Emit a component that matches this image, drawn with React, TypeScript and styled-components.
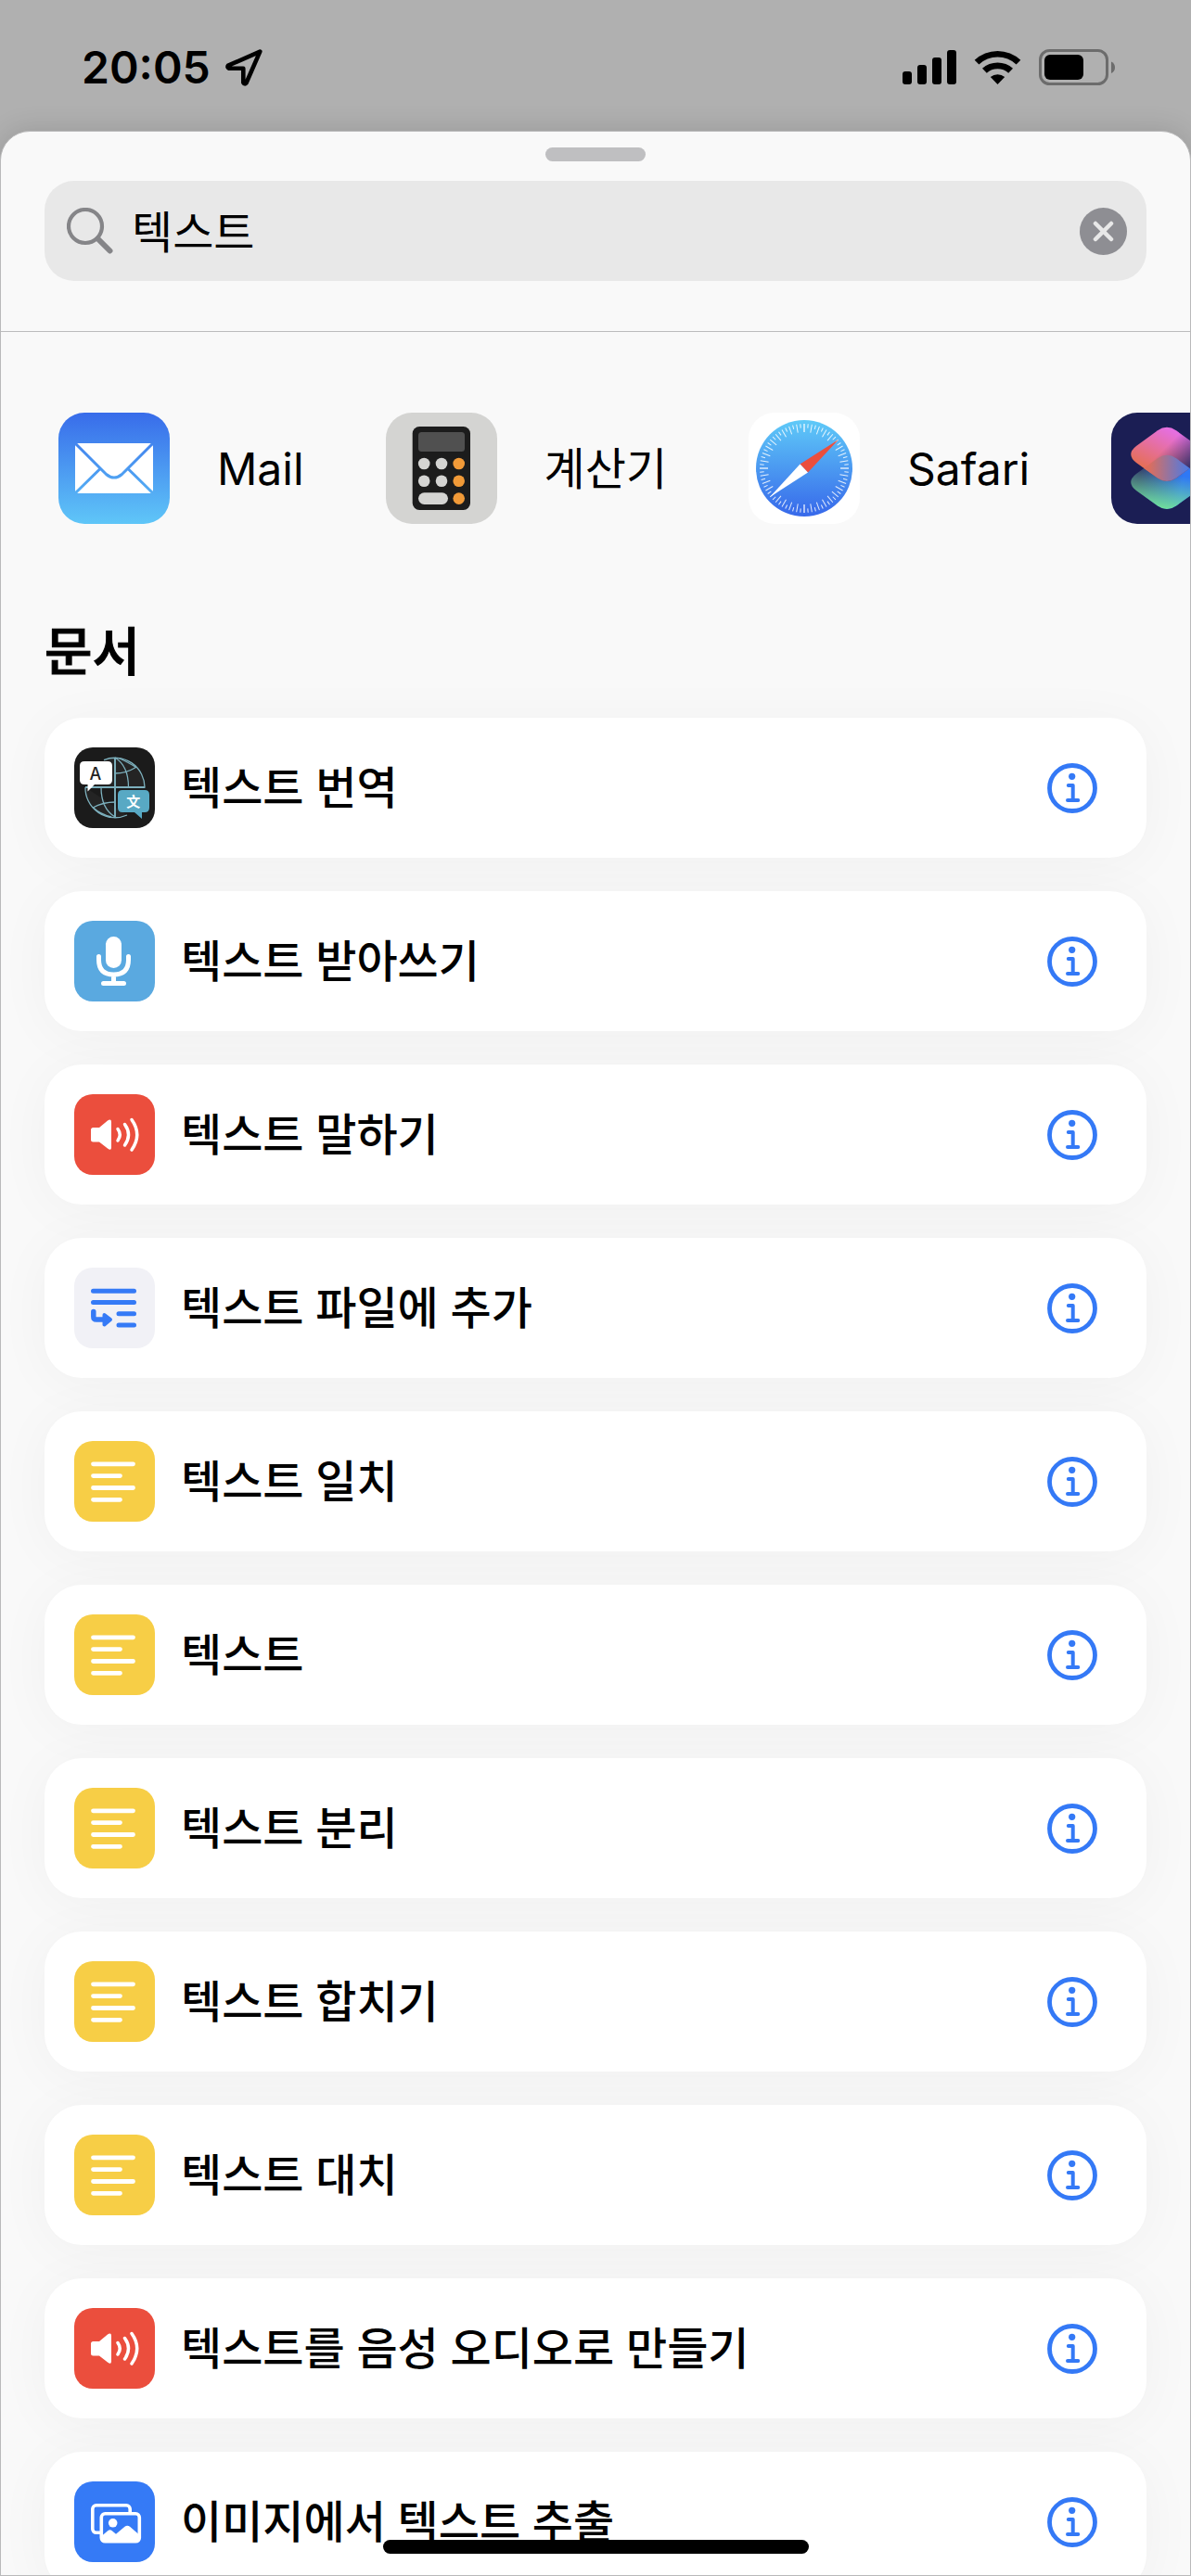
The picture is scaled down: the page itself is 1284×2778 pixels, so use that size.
import React from "react";
import styled, { createGlobalStyle } from "styled-components";

const GlobalStyle = createGlobalStyle`
  *, *::before, *::after { box-sizing: border-box; }
  body {
    margin: 0;
    background: #b0b0b0;
    color: #000;
    font-family: Inter, "Noto Sans CJK KR", sans-serif;
    font-size: 48px;
  }
  button { border: 0; padding: 0; background: none; color: inherit; font: inherit; cursor: pointer; }
  svg { display: block; flex: none; }
`;

const Screen = styled.div`
  position: relative;
  display: flex;
  flex-direction: column;
  height: 100vh;
  overflow: hidden;
`;

const StatusBar = styled.header`
  display: flex;
  flex: none;
  align-items: center;
  justify-content: space-between;
  height: 141px;
  padding: 5px 82px 0 88px;
`;

const StatusGroup = styled.div<{ $gap: number }>`
  display: flex;
  align-items: center;
  gap: ${(p) => p.$gap}px;
`;

const Clock = styled.time`
  font-size: 48px;
  font-weight: 600;
  line-height: 60px;
`;

const Sheet = styled.main`
  display: flex;
  flex: 1;
  flex-direction: column;
  min-height: 0;
  overflow: hidden;
  border: 1px solid #b9b9ba;
  border-radius: 32px 32px 0 0;
  background: #f9f9f9;
  box-shadow: 0 0 30px rgba(0, 0, 0, 0.14);
`;

const SheetHeader = styled.div`
  display: flex;
  flex: none;
  flex-direction: column;
  align-items: center;
  gap: 21px;
  padding: 17px 47px 54px;
  border-bottom: 1px solid #bcbcbd;
`;

const Grabber = styled.div`
  width: 108px;
  height: 15px;
  border-radius: 8px;
  background: #bfbfc1;
`;

const SearchField = styled.form`
  display: flex;
  align-items: center;
  align-self: stretch;
  height: 108px;
  padding: 0 21px 0 24px;
  border-radius: 32px;
  background: #e8e8e8;
`;

const SearchInput = styled.input`
  flex: 1;
  min-width: 0;
  height: 76px;
  margin-left: 20px;
  padding: 0 0 4px;
  border: 0;
  outline: 0;
  background: transparent;
  color: #000;
  font-family: "Noto Sans CJK KR", sans-serif;
  font-size: 48px;
`;

const AppStrip = styled.nav`
  display: flex;
  flex: none;
  gap: 88px;
  padding: 87px 0 92px 62px;
`;

const AppLink = styled.a`
  display: flex;
  flex: none;
  align-items: center;
  gap: 51px;
  color: inherit;
  text-decoration: none;
`;

const AppLabel = styled.span`
  padding-top: 2px;
  line-height: 72px;
`;

const Results = styled.section`
  flex: none;
  padding: 2px 47px 0;
`;

const SectionTitle = styled.h2`
  margin: 0 0 27px;
  font-size: 56px;
  font-weight: 500;
  line-height: 88px;
  -webkit-text-stroke: 1px #000;
`;

const ActionList = styled.ul`
  display: flex;
  flex-direction: column;
  gap: 36px;
  margin: 0;
  padding: 0;
  list-style: none;
`;

const ActionRow = styled.li`
  display: flex;
  align-items: center;
  height: 151px;
  padding: 0 53px 0 32px;
  border-radius: 40px;
  background: #fff;
  box-shadow: 0 6px 60px rgba(0, 0, 0, 0.04);
`;

const ActionName = styled.button`
  flex: 1;
  margin-left: 28px;
  font-weight: 500;
  line-height: 72px;
  text-align: left;
`;

const Tile = styled.svg<{ $bg: string }>`
  width: 87px;
  height: 87px;
  border-radius: 20px;
  background: ${(p) => p.$bg};
`;

const AppTile = styled.svg<{ $bg: string }>`
  width: 120px;
  height: 120px;
  border-radius: 28px;
  background: ${(p) => p.$bg};
`;

const HomeIndicator = styled.div`
  position: absolute;
  bottom: 24px;
  left: 50%;
  width: 459px;
  height: 15px;
  margin-left: -229px;
  border-radius: 8px;
  background: #000;
`;

/* ---------- status icons ---------- */

const LocationIcon = () => (
  <svg width="40" height="40" viewBox="0 0 40 40" fill="none" stroke="#000" strokeWidth="4.600" strokeLinejoin="round">
    <path d="M37.300 2.600 3 17.700Q1.600 19.600 3.800 20.700H19.300V36Q20.800 38.400 22.500 36.500Z" />
  </svg>
);

const SignalIcon = () => (
  <svg width="59" height="38" viewBox="0 0 59 38">
    <rect x="0" y="23" width="10" height="14" rx="3" />
    <rect x="16" y="16" width="10" height="21" rx="3" />
    <rect x="32" y="8" width="10" height="29" rx="3" />
    <rect x="48" y="0" width="10" height="37" rx="3" />
  </svg>
);

const WifiIcon = () => (
  <svg width="52" height="38" viewBox="0 0 52 38">
    <path d="M.7 10.800A36 36 0 0 1 50.300 10.800L45.600 15.600A29 29 0 0 0 5.400 15.600Z" />
    <path d="M9 19.800A24.500 24.500 0 0 1 42 19.800L37.200 24.700A17.500 17.500 0 0 0 13.800 24.700Z" />
    <path d="M17.800 29A12.500 12.500 0 0 1 33.200 29L25.500 37Z" />
  </svg>
);

const BatteryIcon = () => (
  <svg width="82" height="40" viewBox="0 0 82 40">
    <rect x="1.500" y="1.500" width="72" height="36" rx="10" fill="none" stroke="#6c6c6c" strokeWidth="3" />
    <rect x="6" y="6" width="42" height="27" rx="6" />
    <path d="M78 13.500V26Q82 24 82 19.700T78 13.500Z" fill="#6c6c6c" />
  </svg>
);

/* ---------- search icons ---------- */

const SearchIcon = () => (
  <svg width="50" height="50" viewBox="0 0 50 50" fill="none" stroke="#858588">
    <circle cx="20" cy="20" r="18" strokeWidth="4.200" />
    <path d="M33.500 33.500 46.500 46.500" strokeWidth="6" strokeLinecap="round" />
  </svg>
);

const ClearIcon = () => (
  <svg width="51" height="51" viewBox="0 0 51 51">
    <circle cx="25.500" cy="25.500" r="25.500" fill="#8e8e93" />
    <path d="M17 17 34 34M34 17 17 34" stroke="#e8e8e8" strokeWidth="4.500" strokeLinecap="round" />
  </svg>
);

const InfoIcon = () => (
  <svg width="54" height="54" viewBox="0 0 54 54" fill="none" stroke="#3479f6" strokeLinecap="round">
    <circle cx="27" cy="27" r="24.500" strokeWidth="4.800" />
    <circle cx="26.700" cy="14.300" r="3.600" fill="#3479f6" stroke="none" />
    <path d="M22.800 24H27.700V40M22 40H33.300" strokeWidth="4" strokeLinejoin="round" />
  </svg>
);

/* ---------- app icons ---------- */

const MailIcon = () => (
  <AppTile $bg="linear-gradient(#386cea, #5fc6f8)" viewBox="0 0 120 120">
    <defs>
      <linearGradient id="mail" gradientUnits="userSpaceOnUse" x1="0" y1="0" x2="0" y2="120">
        <stop offset="0" stopColor="#386cea" />
        <stop offset="1" stopColor="#5fc6f8" />
      </linearGradient>
    </defs>
    <rect x="18" y="33" width="84" height="54" rx="4" fill="#fff" />
    <g fill="none" stroke="url(#mail)" strokeWidth="3">
      <path d="M18 33 51.500 66.500Q60 73.500 68.500 66.500L102 33" />
      <path d="M45 60.500 18 87M75 60.500 102 87" />
    </g>
  </AppTile>
);

const CalculatorIcon = () => (
  <AppTile $bg="#d4d4d2" viewBox="0 0 120 120">
    <rect x="28.700" y="15" width="62.300" height="90" rx="7.500" fill="#1c1c1c" />
    <rect x="35" y="21" width="50" height="21" rx="3.500" fill="#505050" />
    {[55, 73.7].map((y) => (
      <g key={y} fill="#d4d4d2">
        <circle cx="41.200" cy={y} r="6.300" />
        <circle cx="60" cy={y} r="6.300" />
      </g>
    ))}
    <rect x="35" y="86.300" width="32" height="12.600" rx="6.300" fill="#d4d4d2" />
    {[55, 73.7, 92.6].map((y) => (
      <circle key={y} cx="78.700" cy={y} r="6.300" fill="#f19a38" />
    ))}
  </AppTile>
);

const SafariIcon = () => (
  <AppTile $bg="#fff" viewBox="0 0 120 120">
    <defs>
      <linearGradient id="safari" x1="0" y1="0" x2="0" y2="1">
        <stop offset="0" stopColor="#5fcaf8" />
        <stop offset="1" stopColor="#3768ea" />
      </linearGradient>
    </defs>
    <circle cx="60" cy="60" r="52" fill="url(#safari)" />
    {Array.from({ length: 72 }, (_, i) => (
      <path
        key={i}
        d={i % 2 ? "M60 12V16.500" : "M60 12V21"}
        stroke="#fff"
        strokeOpacity={i % 18 ? 0.85 : 0.6}
        strokeWidth={i % 18 ? 1 : 2}
        transform={`rotate(${i * 5} 60 60)`}
      />
    ))}
    <path d="M97 29 55.500 55.500 64 64.500Z" fill="#eb4e3d" />
    <path d="M23 91 55.500 55.500 64 64.500Z" fill="#fff" />
  </AppTile>
);

const upperLayer =
  "M50 19.200Q60 12.500 70 19.200L93 36Q104.500 45 93 54L70 70.500Q60 77.500 50 70.500L27 54Q15.500 45 27 36Z";
const lowerLayer =
  "M50 49.200Q60 42.500 70 49.200L93 66Q104.500 75 93 84L70 100.500Q60 107.500 50 100.500L27 84Q15.500 75 27 66Z";

const ShortcutsIcon = () => (
  <AppTile $bg="#1b1e54" viewBox="0 0 120 120">
    <defs>
      <linearGradient id="sc-low" x1="0.150" y1="0.200" x2="0.750" y2="0.300">
        <stop offset="0" stopColor="#35446e" />
        <stop offset="1" stopColor="#2f78f5" />
      </linearGradient>
      <linearGradient id="sc-green" x1="0.400" y1="1" x2="0.550" y2="0.350">
        <stop offset="0" stopColor="#73e39a" />
        <stop offset="1" stopColor="#73e39a" stopOpacity="0" />
      </linearGradient>
      <linearGradient id="sc-top" x1="0.100" y1="0.700" x2="0.550" y2="0.050">
        <stop offset="0" stopColor="#e66f55" />
        <stop offset="1" stopColor="#e56fe0" />
      </linearGradient>
      <linearGradient id="sc-shade" x1="0.500" y1="0.350" x2="0.900" y2="0.650">
        <stop offset="0" stopColor="#3a2f6c" stopOpacity="0" />
        <stop offset="1" stopColor="#33306c" />
      </linearGradient>
      <linearGradient id="sc-mix" x1="0.250" y1="0" x2="0.850" y2="0">
        <stop offset="0" stopColor="#dd6e5c" />
        <stop offset="1" stopColor="#3f7bf0" />
      </linearGradient>
      <clipPath id="sc-clip">
        <path d={lowerLayer} />
      </clipPath>
    </defs>
    <path d={lowerLayer} fill="url(#sc-low)" />
    <path d={lowerLayer} fill="url(#sc-green)" />
    <path d={upperLayer} fill="url(#sc-top)" />
    <path d={upperLayer} fill="url(#sc-shade)" />
    <path d={upperLayer} fill="url(#sc-mix)" clipPath="url(#sc-clip)" />
  </AppTile>
);

/* ---------- action icons ---------- */

const TranslateIcon = () => (
  <Tile $bg="#1b1b1b" viewBox="0 0 87 87">
    <g fill="none" stroke="#7db1be" strokeWidth="1.300">
      <path d="M32 13.600A32 32 0 0 1 76 43H22M44 11V75.500M57 73A32 32 0 0 1 12 43" fill="#242424" />
      <path d="M44 11Q58.500 20 58.500 43M48 11.500Q60 17 66.500 21.500Q56 28 44 28M29 43Q29 66 44 75M20 65Q31 59 44 59M20.500 65Q28 72 40 75" />
      <path d="M44 11V75.500M12 43H76" strokeWidth="1.800" />
    </g>
    <path d="M11 15H36Q41 15 41 20V35Q41 40 36 40H22L14.500 47.500V40H11Q6 40 6 35V20Q6 15 11 15Z" fill="#fff" />
    <path d="M52 46H76Q81 46 81 51V65Q81 70 76 70H73V77L65 70H52Q47 70 47 65V51Q47 46 52 46Z" fill="#58a9c4" />
    <text x="23" y="34.500" textAnchor="middle" fontFamily="Inter, sans-serif" fontSize="18" fontWeight="500" fill="#222">A</text>
    <text x="63.700" y="63.500" textAnchor="middle" fontFamily="Noto Sans CJK SC, sans-serif" fontSize="15" fontWeight="700" fill="#fff">文</text>
  </Tile>
);

const MicIcon = () => (
  <Tile $bg="#5aa9e0" viewBox="0 0 87 87">
    <rect x="34" y="17" width="17" height="34" rx="8.500" fill="#fff" />
    <path d="M26.500 38.500V42Q26.500 58 42.500 58T58.500 42V38.500M42.500 58V67M31.500 67.500H53.500" fill="none" stroke="#fff" strokeWidth="5" strokeLinecap="round" />
  </Tile>
);

const SpeakerIcon = () => (
  <Tile $bg="#eb4e3d" viewBox="0 0 87 87">
    <path d="M20 36H27L36 28.500Q40 26 40 30V57.500Q40 61.500 36 58.500L27 51.500H20.500Q18 51.500 18 49V38.500Q18 36 20.500 36Z" fill="#fff" />
    <path d="M47 37.500Q51.500 43.700 47 50M54.500 32.500Q62.500 43.700 54.500 55M62 27.500Q73.500 43.700 62 60" fill="none" stroke="#fff" strokeWidth="3.500" strokeLinecap="round" />
  </Tile>
);

const AppendIcon = () => (
  <Tile $bg="#f1f1f6" viewBox="0 0 87 87">
    <g fill="none" stroke="#357af6" strokeWidth="5" strokeLinecap="round" strokeLinejoin="round">
      <path d="M20.500 25.300H64.500M20.500 37.500H64.500M48 49.800H64.500M48 62H64.500" />
      <path d="M20.800 47.500V53Q20.800 56 24 56H33" strokeWidth="5.500" />
      <path d="M32.500 51 39 56 32.500 61.500Z" fill="#357af6" strokeWidth="4" />
    </g>
  </Tile>
);

const TextIcon = () => (
  <Tile $bg="#f7ce46" viewBox="0 0 87 87">
    <path d="M20.500 24.800H63.500M20.500 37.600H49.500M20.500 50.500H63.500M20.500 63.300H49.500" stroke="#fff" strokeWidth="4.800" strokeLinecap="round" />
  </Tile>
);

const ImagesIcon = () => (
  <Tile $bg="#357af6" viewBox="0 0 87 87">
    <g fill="#357af6" stroke="#fff" strokeWidth="3.600">
      <rect x="19.800" y="25.800" width="40.400" height="29.500" rx="4" />
      <rect x="29.300" y="34.800" width="41" height="30" rx="4" />
    </g>
    <circle cx="41.700" cy="44.800" r="4.800" fill="#fff" />
    <path d="M30 58.500 36.500 53Q38.500 51.500 40.500 53L45 56.800 54.500 48.800Q57.300 46.500 60 48.800L69.500 57V64H30Z" fill="#fff" />
  </Tile>
);

const apps = [
  { name: "Mail", Icon: MailIcon },
  { name: "계산기", Icon: CalculatorIcon },
  { name: "Safari", Icon: SafariIcon },
];

const actions = [
  { name: "텍스트 번역", Icon: TranslateIcon },
  { name: "텍스트 받아쓰기", Icon: MicIcon },
  { name: "텍스트 말하기", Icon: SpeakerIcon },
  { name: "텍스트 파일에 추가", Icon: AppendIcon },
  { name: "텍스트 일치", Icon: TextIcon },
  { name: "텍스트", Icon: TextIcon },
  { name: "텍스트 분리", Icon: TextIcon },
  { name: "텍스트 합치기", Icon: TextIcon },
  { name: "텍스트 대치", Icon: TextIcon },
  { name: "텍스트를 음성 오디오로 만들기", Icon: SpeakerIcon },
  { name: "이미지에서 텍스트 추출", Icon: ImagesIcon },
];

export default function App() {
  const [query, setQuery] = React.useState("텍스트");
  return (
    <>
      <GlobalStyle />
      <Screen>
        <StatusBar>
          <StatusGroup $gap={16}>
            <Clock>20:05</Clock>
            <LocationIcon />
          </StatusGroup>
          <StatusGroup $gap={18}>
            <SignalIcon />
            <WifiIcon />
            <BatteryIcon />
          </StatusGroup>
        </StatusBar>
        <Sheet>
          <SheetHeader>
            <Grabber />
            <SearchField role="search" onSubmit={(e) => e.preventDefault()}>
              <SearchIcon />
              <SearchInput aria-label="검색" value={query} onChange={(e) => setQuery(e.target.value)} />
              <button type="button" aria-label="지우기" onClick={() => setQuery("")}>
                <ClearIcon />
              </button>
            </SearchField>
          </SheetHeader>
          <AppStrip>
            {apps.map(({ name, Icon }) => (
              <AppLink key={name} href="#">
                <Icon />
                <AppLabel>{name}</AppLabel>
              </AppLink>
            ))}
            <AppLink href="#" aria-label="단축어">
              <ShortcutsIcon />
            </AppLink>
          </AppStrip>
          <Results>
            <SectionTitle>문서</SectionTitle>
            <ActionList>
              {actions.map(({ name, Icon }) => (
                <ActionRow key={name}>
                  <Icon />
                  <ActionName type="button">{name}</ActionName>
                  <button type="button" aria-label={`${name} 정보`}>
                    <InfoIcon />
                  </button>
                </ActionRow>
              ))}
            </ActionList>
          </Results>
        </Sheet>
        <HomeIndicator />
      </Screen>
    </>
  );
}
